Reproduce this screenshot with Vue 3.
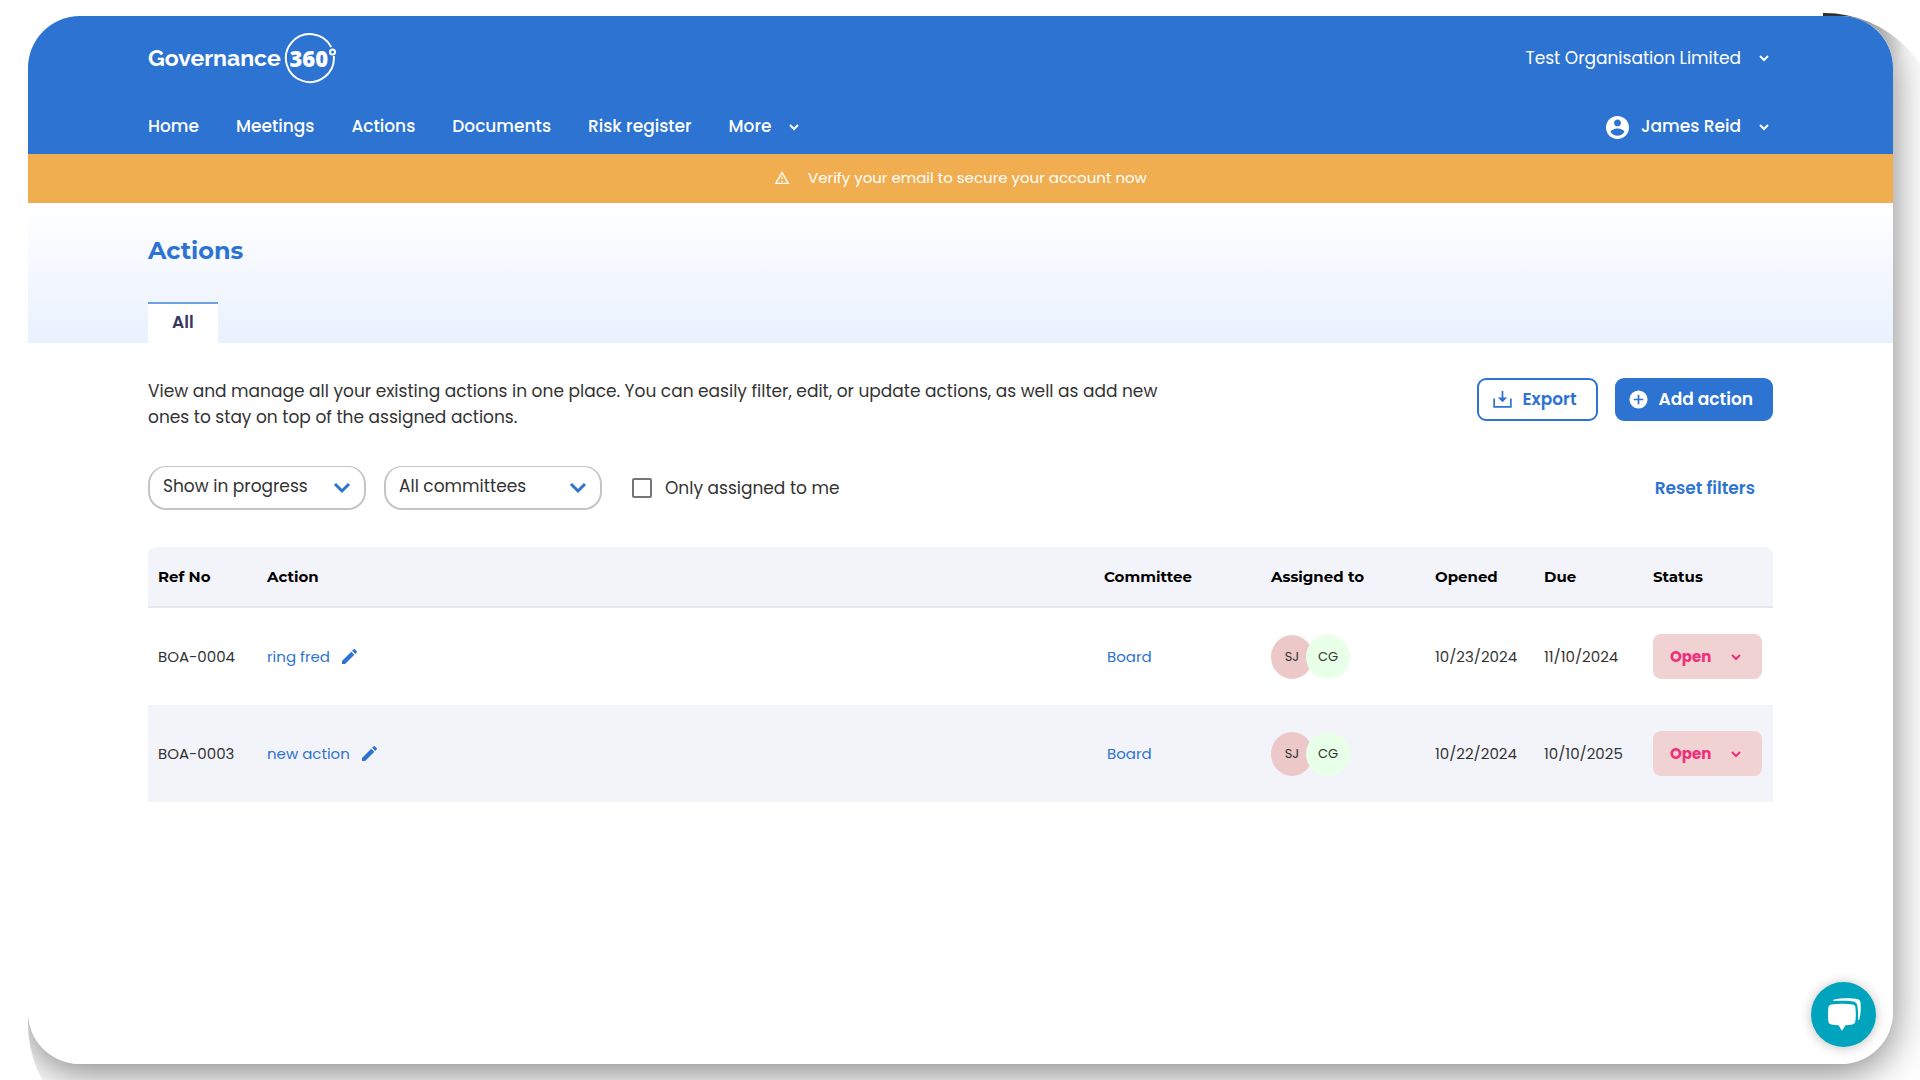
<script setup>
import { ref } from 'vue'

const nav = ['Home', 'Meetings', 'Actions', 'Documents', 'Risk register']
const progress = ref('Show in progress')
const committee = ref('All committees')
const mine = ref(false)
const rows = [
  { id: 'BOA-0004', action: 'ring fred', committee: 'Board', opened: '10/23/2024', due: '11/10/2024' },
  { id: 'BOA-0003', action: 'new action', committee: 'Board', opened: '10/22/2024', due: '10/10/2025' },
]
</script>

<template>
  <div class="stage">
    <div class="shade" aria-hidden="true"><div class="shade-cast"></div></div>
    <div class="card">
      <header class="header">
        <div class="bar">
          <a href="#" class="brand" aria-label="Governance 360">
            <span class="brand-name">Governance</span>
            <span class="brand-badge">
              <svg class="ring" viewBox="0 0 52 52" aria-hidden="true">
                <path d="M47.2 15A24 24 0 1 0 49.800 24" />
                <circle cx="48.500" cy="20" r="2.500" />
              </svg>
              <span class="brand-num">360</span>
            </span>
          </a>
          <button class="menu org" type="button">
            Test Organisation Limited
            <svg class="chev" viewBox="0 0 10 8" aria-hidden="true"><path d="M1 2l4 4 4-4" /></svg>
          </button>
        </div>
        <div class="bar">
          <nav class="nav">
            <a v-for="item in nav" :key="item" href="#">{{ item }}</a>
            <button class="menu more" type="button">
              More
              <svg class="chev" viewBox="0 0 10 8" aria-hidden="true"><path d="M1 2l4 4 4-4" /></svg>
            </button>
          </nav>
          <button class="menu user" type="button">
            <svg class="avatar-icon" viewBox="2 2 20 20" aria-hidden="true">
              <path d="M12 2C6.480 2 2 6.480 2 12s4.480 10 10 10 10-4.480 10-10S17.520 2 12 2zm0 3c1.660 0 3 1.340 3 3s-1.340 3-3 3-3-1.340-3-3 1.340-3 3-3zm0 14.200c-2.500 0-4.710-1.280-6-3.220.030-1.990 4-3.080 6-3.080 1.990 0 5.970 1.090 6 3.080-1.290 1.940-3.500 3.220-6 3.220z" />
            </svg>
            <span class="user-name">James Reid</span>
            <svg class="chev" viewBox="0 0 10 8" aria-hidden="true"><path d="M1 2l4 4 4-4" /></svg>
          </button>
        </div>
      </header>

      <a href="#" class="verify">
        <svg viewBox="0 0 24 24" aria-hidden="true">
          <path d="M12 5.990L19.530 19H4.470L12 5.990M12 2L1 21h22L12 2zm1 14h-2v2h2v-2zm0-6h-2v4h2v-4z" />
        </svg>
        <span>Verify your email to secure your account now</span>
      </a>

      <section class="title-band">
        <h1>Actions</h1>
        <a href="#" class="tab">All</a>
      </section>

      <main class="content">
        <div class="intro">
          <p>
            View and manage all your existing actions in one place. You can easily filter, edit, or update actions, as well as add new<br />
            ones to stay on top of the assigned actions.
          </p>
          <div class="buttons">
            <button class="btn outline" type="button">
              <svg viewBox="0 0 20 18" aria-hidden="true">
                <path d="M1.200 8v8.800h17.600V8" fill="none" stroke="currentColor" stroke-width="1.800" />
                <path d="M9.100 0h1.800v7h4L10 12 5.100 7h4z" fill="currentColor" />
              </svg>
              <span>Export</span>
            </button>
            <button class="btn solid" type="button">
              <svg viewBox="0 0 20 20" aria-hidden="true">
                <circle cx="10" cy="10" r="9.500" fill="#fff" />
                <path d="M10 5v10M5 10h10" stroke="#2d73d2" stroke-width="1.800" />
              </svg>
              <span>Add action</span>
            </button>
          </div>
        </div>

        <div class="filters">
          <div class="select">
            <select v-model="progress" aria-label="Progress">
              <option>Show in progress</option>
            </select>
            <svg viewBox="0 0 18 12" aria-hidden="true"><path d="M2 2l7 7 7-7" /></svg>
          </div>
          <div class="select">
            <select v-model="committee" aria-label="Committee">
              <option>All committees</option>
            </select>
            <svg viewBox="0 0 18 12" aria-hidden="true"><path d="M2 2l7 7 7-7" /></svg>
          </div>
          <label class="check"><input v-model="mine" type="checkbox" /> Only assigned to me</label>
          <button class="reset" type="button">Reset filters</button>
        </div>

        <table>
          <colgroup>
            <col class="c-ref" /><col /><col class="c-com" /><col class="c-ass" />
            <col class="c-date" /><col class="c-date" /><col class="c-status" />
          </colgroup>
          <thead>
            <tr>
              <th>Ref No</th><th>Action</th><th>Committee</th><th>Assigned to</th>
              <th>Opened</th><th>Due</th><th>Status</th>
            </tr>
          </thead>
          <tbody>
            <tr v-for="row in rows" :key="row.id">
              <td>{{ row.id }}</td>
              <td>
                <a href="#" class="action">{{ row.action }}
                  <svg viewBox="3 3 18 18" aria-hidden="true">
                    <path d="M3 17.250V21h3.750L17.810 9.940l-3.750-3.750L3 17.250zM20.710 7.040a1 1 0 0 0 0-1.410l-2.340-2.340a1 1 0 0 0-1.410 0l-1.830 1.830 3.750 3.750 1.830-1.830z" />
                  </svg>
                </a>
              </td>
              <td><a href="#" class="board">{{ row.committee }}</a></td>
              <td>
                <div class="people"><span class="person sj">SJ</span><span class="person cg">CG</span></div>
              </td>
              <td>{{ row.opened }}</td>
              <td>{{ row.due }}</td>
              <td>
                <button class="status" type="button">
                  Open
                  <svg class="chev" viewBox="0 0 10 8" aria-hidden="true"><path d="M1 2l4 4 4-4" /></svg>
                </button>
              </td>
            </tr>
          </tbody>
        </table>
      </main>

      <button class="chat" type="button" aria-label="Open chat">
        <svg viewBox="0 0 34 34" aria-hidden="true">
          <path d="M6.500 1.800C14 0 24 0 30 1c2.500.400 3.400 1.600 3.600 4 .400 6 .100 12-1.400 16.500-.3 1-1.200.800-1.200-.200.200-5 .100-9-.500-13C30 5 28.500 3.700 25 3.300c-6-.6-12-.6-18-.4-.9 0-1.200-.8-.5-1.100z" />
          <path d="M4.500 6.600c7-1 14-1 21 0 1.800.300 2.700 1.200 2.900 3 .6 5 .6 9 0 13.500-.2 2-1.100 3.100-3 3.400-2.300.400-4.500.600-6.900.700L15.600 32c-.4.800-.9.800-1.300 0l-2.600-4.700c-2.500-.1-5-.4-7.300-.8-1.900-.3-2.800-1.300-3-3.200C.8 19 .8 14 1.400 9.600c.3-1.800 1.300-2.700 3.100-3z" />
        </svg>
      </button>
    </div>
  </div>
</template>

<style>
body {
  margin: 0;
  background: #fff;
}
</style>

<style scoped>
.stage {
  position: relative;
  box-sizing: border-box;
  min-height: 100vh;
  padding: 16px 27px 16px 28px;
  display: flex;
  overflow: hidden;
  font-family: Poppins, Inter, "Noto Sans", sans-serif;
  font-size: 17px;
  color: #333;
}
/* Shadow that falls only to the right of and below the card */
.shade {
  position: absolute;
  inset: 13px -20px -60px 28px;
  border-radius: 0 116px 0 116px;
  overflow: hidden;
  clip-path: polygon(calc(100% - 117px) 0, 100% 0, 100% 100%, 0 100%, 0 calc(100% - 134px), calc(100% - 117px) calc(100% - 134px));
  background: radial-gradient(circle at calc(100% - 117px) 0, rgba(0, 0, 0, 0.8) 20px, rgba(0, 0, 0, 0.25) 52px, transparent 90px);
}
.shade-cast {
  position: absolute;
  inset: 2px 47px 76px 0;
  border-radius: 52px;
  box-shadow: 0 8px 40px rgba(0, 0, 0, 0.5);
}
.card {
  position: relative;
  flex: 1;
  display: flex;
  flex-direction: column;
  border-radius: 52px;
  overflow: hidden;
  background: #fff;
}
button,
select,
input {
  font: inherit;
  color: inherit;
}
button {
  border: 0;
  background: none;
  padding: 0;
  cursor: pointer;
}
a {
  color: inherit;
  text-decoration: none;
}
.header {
  background: #2d73d2;
  color: #fff;
  padding: 14px 120px 0;
}
.bar {
  display: flex;
  justify-content: space-between;
  align-items: center;
  height: 56px;
}
.bar + .bar {
  margin-top: 12px;
}
.brand {
  display: flex;
  align-items: center;
  gap: 3px;
}
.brand-name {
  font: 700 23px/32px Raleway, Lato, sans-serif;
}
.brand-badge {
  position: relative;
  width: 52px;
  height: 52px;
  display: flex;
  align-items: center;
  justify-content: center;
}
.ring {
  position: absolute;
  inset: 0;
  fill: none;
  stroke: #fff;
  stroke-width: 2;
}
.brand-num {
  padding-right: 2px;
  font: 800 22px/32px "Open Sans", sans-serif;
}
.menu {
  display: flex;
  align-items: center;
}
.chev {
  width: 10px;
  height: 8px;
  fill: none;
  stroke: currentColor;
  stroke-width: 2;
}
.bar + .bar svg {
  margin-top: 2px;
}
.org,
.user {
  gap: 18px;
  padding-right: 4px;
}
.nav {
  display: flex;
  align-items: center;
  gap: 37px;
  font-weight: 500;
}
.more {
  gap: 18px;
  font-weight: 500;
}
.user {
  font-weight: 500;
}
.avatar-icon {
  width: 23px;
  height: 23px;
  fill: #fff;
  margin-right: -6px;
}
.verify {
  display: flex;
  align-items: center;
  justify-content: center;
  gap: 18px;
  box-sizing: border-box;
  height: 49px;
  padding-bottom: 2px;
  background: #f0ae50;
  color: #fff;
  font-size: 15px;
}
.verify svg {
  width: 16px;
  height: 16px;
  fill: #fff;
}
.title-band {
  display: flex;
  flex-direction: column;
  justify-content: space-between;
  align-items: flex-start;
  box-sizing: border-box;
  height: 140px;
  padding: 32px 120px 0;
  background: linear-gradient(#fff, #e9f1fe);
}
h1 {
  margin: 0;
  font: 700 24px/32px Montserrat, Inter, sans-serif;
  color: #2d73d2;
}
.tab {
  box-sizing: border-box;
  height: 41px;
  padding: 0 24px;
  border-top: 2px solid #6fa0e2;
  background: #fff;
  color: #3a3560;
  font-weight: 600;
  line-height: 36px;
}
.content {
  padding: 35px 120px;
}
.intro,
.filters {
  display: flex;
  align-items: flex-start;
}
.intro {
  justify-content: space-between;
}
p {
  margin: 0;
  line-height: 26px;
}
.buttons {
  display: flex;
  gap: 17px;
}
.btn {
  display: flex;
  align-items: center;
  box-sizing: border-box;
  gap: 11px;
  height: 43px;
  padding: 0 19px 0 14px;
  border: 2px solid #2d73d2;
  border-radius: 9px;
  font-weight: 600;
  color: #2d73d2;
}
.btn span {
  padding-bottom: 2px;
}
.btn svg {
  width: 19px;
  height: 19px;
}
.solid {
  background: #2d73d2;
  color: #fff;
  padding: 0 18px 0 12px;
}
.filters {
  align-items: center;
  margin-top: 36px;
}
.select {
  position: relative;
  width: 218px;
  margin-right: 18px;
}
.select select {
  display: block;
  width: 100%;
  height: 44px;
  padding: 0 48px 4px 13px;
  border: 2px solid #c4c4c4;
  border-top-width: 1px;
  border-radius: 18px;
  background: #fff;
  appearance: none;
}
.select svg {
  position: absolute;
  right: 15px;
  top: 16px;
  width: 18px;
  height: 12px;
  fill: none;
  stroke: #2d73d2;
  stroke-width: 3;
  pointer-events: none;
}
.check {
  display: flex;
  align-items: center;
  gap: 13px;
  margin-left: 12px;
}
.check input {
  appearance: none;
  box-sizing: border-box;
  width: 20px;
  height: 20px;
  margin: 0;
  border: 2px solid #757575;
  border-radius: 2px;
}
.reset {
  margin-left: auto;
  margin-right: 18px;
  color: #2d73d2;
  font-weight: 600;
}
table {
  width: 100%;
  margin-top: 37px;
  table-layout: fixed;
  border-spacing: 0;
  font-size: 15px;
}
.c-ref { width: 109px; }
.c-com { width: 167px; }
.c-ass { width: 164px; }
.c-date { width: 109px; }
.c-status { width: 130px; }
th,
td {
  text-align: left;
  padding: 0 10px;
  white-space: nowrap;
}
th {
  height: 59px;
  background: #f3f4fa;
  border-bottom: 2px solid #e6e7ec;
  color: #000;
  font: 700 15px/20px Montserrat, Inter, sans-serif;
}
th:first-child {
  border-top-left-radius: 8px;
}
th:last-child {
  border-top-right-radius: 8px;
}
td {
  height: 97px;
}
tbody tr:nth-child(2) {
  background: #f3f4fa;
}
.action,
.board {
  color: #2d73d2;
}
.action {
  display: inline-flex;
  align-items: center;
  gap: 12px;
}
.action svg {
  width: 15px;
  height: 15px;
  fill: #2d73d2;
}
.board {
  margin-left: 3px;
}
.people {
  display: flex;
}
.person {
  width: 44px;
  height: 44px;
  border-radius: 50%;
  font-size: 13px;
  line-height: 43px;
  text-align: center;
}
.sj {
  width: 42px;
  background: #edc8c8;
}
.cg {
  margin-left: -7px;
  background: #e8ffe8;
}
.status {
  display: flex;
  align-items: center;
  justify-content: space-between;
  width: 109px;
  height: 45px;
  padding: 0 21px 0 17px;
  border-radius: 8px;
  background: #f0d2d2;
  color: #ee2f7b;
  font-weight: 700;
}
.chat {
  position: absolute;
  right: 17px;
  bottom: 17px;
  display: grid;
  place-items: center;
  width: 65px;
  height: 65px;
  border-radius: 50%;
  background: #00a4bd;
  box-shadow: 0 1px 12px rgba(0, 0, 0, 0.25);
}
.chat svg {
  width: 34px;
  height: 34px;
  fill: #fff;
}
</style>
